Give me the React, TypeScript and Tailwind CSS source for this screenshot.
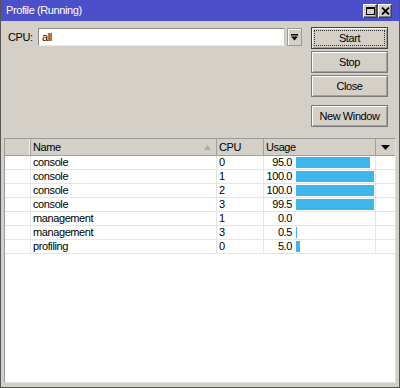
import { ReactNode } from 'react';

interface Row {
  name: string;
  cpu: number;
  usage: number;
}

const rows: Row[] = [
  { name: 'console', cpu: 0, usage: 95.0 },
  { name: 'console', cpu: 1, usage: 100.0 },
  { name: 'console', cpu: 2, usage: 100.0 },
  { name: 'console', cpu: 3, usage: 99.5 },
  { name: 'management', cpu: 1, usage: 0.0 },
  { name: 'management', cpu: 3, usage: 0.5 },
  { name: 'profiling', cpu: 0, usage: 5.0 },
];

const font = "font-['Liberation_Sans',Arial,sans-serif] text-[11px] tracking-[-0.4px]";

function TitleButton({ children }: { children: ReactNode }) {
  return (
    <div className="w-[14px] h-[14px] bg-[#d4d0c8] border border-[#404040] border-t-white border-l-white shadow-[inset_-1px_-1px_0_#808080] flex items-center justify-center">
      {children}
    </div>
  );
}

function Button({ label, focused }: { label: string; focused?: boolean }) {
  return (
    <div
      className={`h-[22px] w-[77px] bg-[#d4d0c8] border ${
        focused ? 'border-[#404040]' : 'border-[#7a7a7a]'
      } shadow-[inset_1px_1px_0_#ffffff,inset_-1px_-1px_0_#a0a0a0] flex items-center justify-center p-[2px]`}
    >
      <div
        className={`w-full h-full flex items-center justify-center text-black ${
          focused ? 'border border-dotted border-[#333]' : ''
        }`}
      >
        {label}
      </div>
    </div>
  );
}

const barWidth = (usage: number) => (usage > 0 ? Math.max(1, Math.round(usage * 0.78)) : 0);

export default function App() {
  return (
    <div className={`w-[400px] h-[388px] bg-[#d4d0c8] border-x border-b border-[#555] flex flex-col ${font}`}>
      {/* title bar */}
      <div className="h-[21px] bg-[#4b4fc9] flex items-center justify-between pl-[5px] pr-[7px] shrink-0">
        <span className="text-white">Profile (Running)</span>
        <div className="flex gap-[1px] mt-[1px]">
          <TitleButton>
            <div className="w-[9px] h-[8px] border border-black border-t-2" />
          </TitleButton>
          <TitleButton>
            <svg width="9" height="8" viewBox="0 0 9 8">
              <path d="M1 0.5 L8 7.5 M8 0.5 L1 7.5" stroke="#000" strokeWidth="1.8" />
            </svg>
          </TitleButton>
        </div>
      </div>

      {/* top controls */}
      <div className="flex pt-[7px] pl-[7px] shrink-0">
        <div className="flex items-start">
          <span className="w-[30px] h-[18px] flex items-center text-black">CPU:</span>
          <div className="w-[247px] h-[18px] bg-white border border-[#8a8a8a] border-r-[#c8c8c8] border-b-[#e8e8e8] flex items-center pl-[3px] text-black">
            all
          </div>
          <div className="ml-[2px] w-[15px] h-[18px] bg-[#d4d0c8] border border-[#9a9a9a] shadow-[inset_1px_1px_0_#ffffff] flex items-center justify-center">
            <svg width="7" height="7" viewBox="0 0 7 7">
              <rect x="0" y="0" width="7" height="1.5" fill="#000" />
              <path d="M0 2.5 L7 2.5 L3.5 6.5 Z" fill="#000" />
            </svg>
          </div>
        </div>
        <div className="ml-[9px] -mt-[1px] flex flex-col gap-[2px]">
          <Button label="Start" focused />
          <Button label="Stop" />
          <Button label="Close" />
          <div className="mt-[6px]">
            <Button label="New Window" />
          </div>
        </div>
      </div>

      {/* table */}
      <div className="mx-[3px] mt-[11px] mb-[4px] flex-1 bg-white border border-[#9a9a9a] border-r-[#e0e0e0] border-b-[#e0e0e0] flex flex-col text-black">
        <div className="flex h-[17px] bg-[#d4d0c8] border-b border-[#a0a0a0] shrink-0">
          <div className="w-[26px] border-r border-[#a0a0a0] shadow-[inset_-1px_0_0_#f0f0f0]" />
          <div className="w-[186px] border-r border-[#a0a0a0] flex items-center pl-[2px] relative">
            Name
            <svg className="absolute right-[5px] top-[6px]" width="7" height="5" viewBox="0 0 7 5">
              <path d="M3.5 0 L7 5 L0 5 Z" fill="#b0aca4" />
            </svg>
          </div>
          <div className="w-[47px] border-r border-[#a0a0a0] flex items-center pl-[2px]">CPU</div>
          <div className="w-[112px] border-r border-[#a0a0a0] flex items-center pl-[2px]">Usage</div>
          <div className="flex-1 flex items-center justify-center">
            <svg width="9" height="5" viewBox="0 0 9 5">
              <path d="M0 0 L9 0 L4.5 5 Z" fill="#000" />
            </svg>
          </div>
        </div>
        {rows.map((r, i) => (
          <div key={i} className="flex h-[14px] border-b border-[#e4e4e4]">
            <div className="w-[26px] border-r border-[#e4e4e4]" />
            <div className="w-[186px] border-r border-[#e4e4e4] flex items-center pl-[2px]">{r.name}</div>
            <div className="w-[47px] border-r border-[#e4e4e4] flex items-center pl-[2px]">{r.cpu}</div>
            <div className="w-[112px] border-r border-[#e4e4e4] flex items-center">
              <span className="w-[28px] text-right">{r.usage.toFixed(1)}</span>
              <div className="ml-[4px] h-[11px] bg-[#3eb6ec]" style={{ width: `${barWidth(r.usage)}px` }} />
            </div>
            <div className="flex-1" />
          </div>
        ))}
      </div>
    </div>
  );
}
